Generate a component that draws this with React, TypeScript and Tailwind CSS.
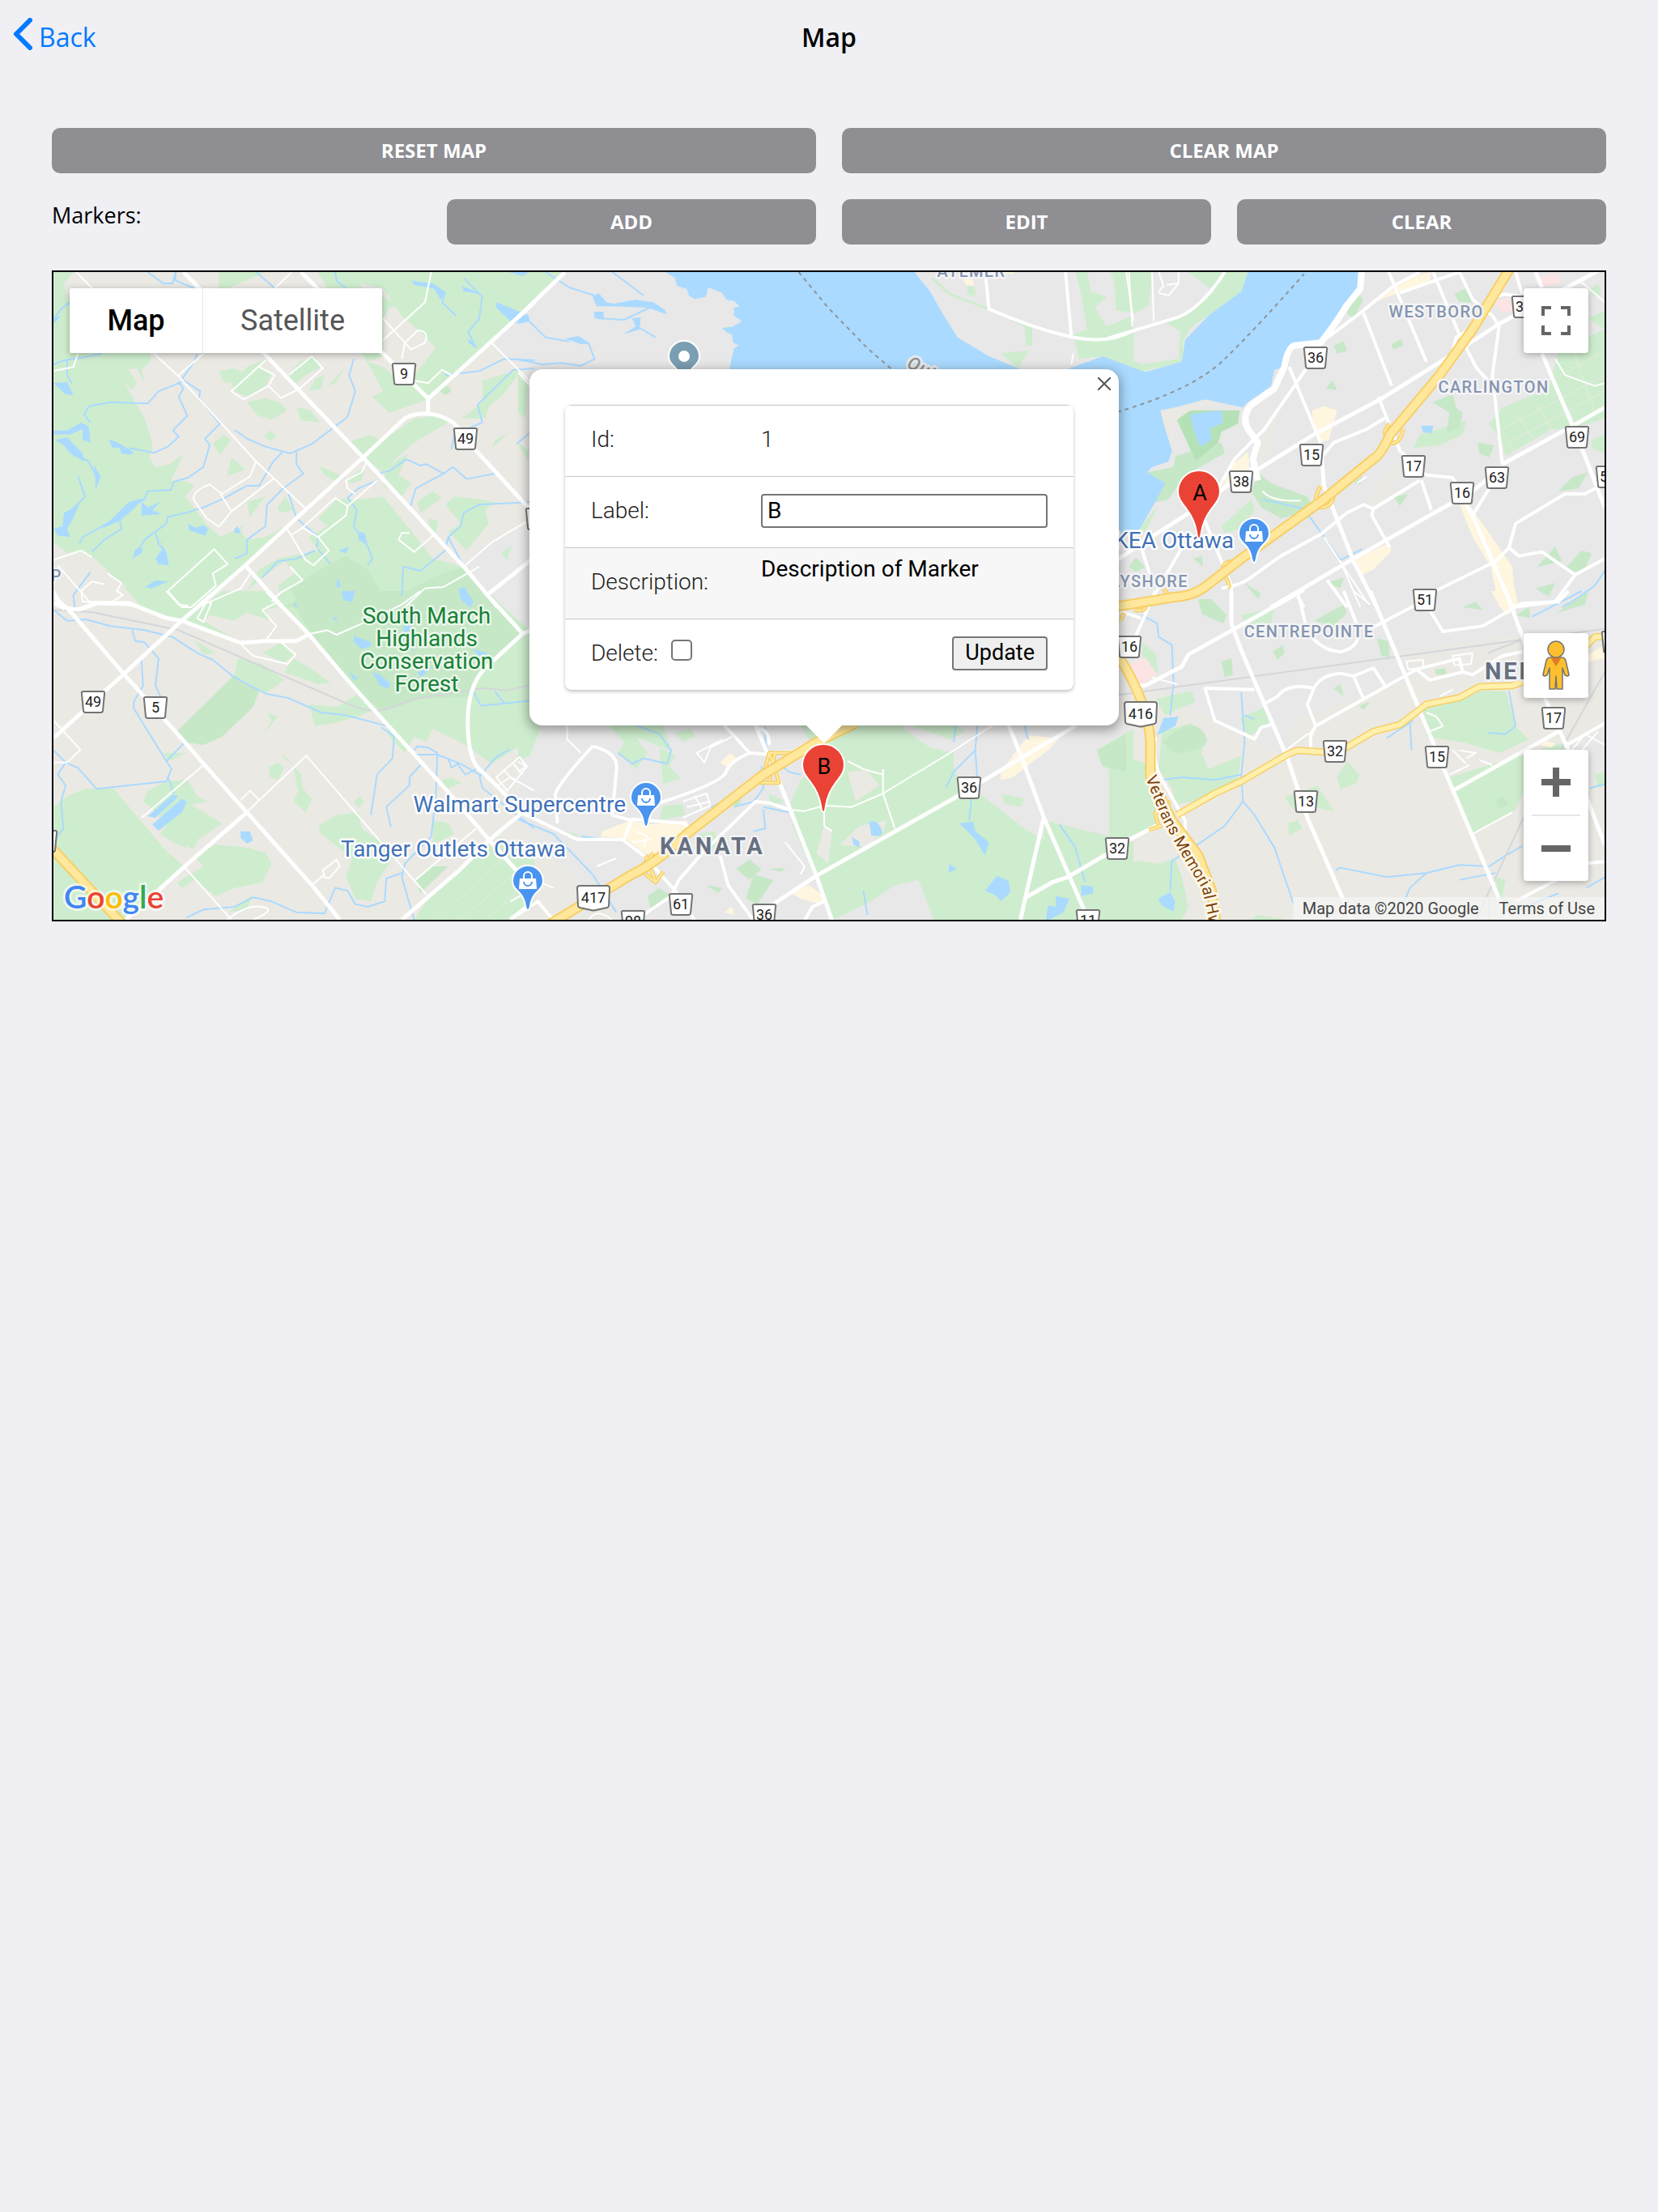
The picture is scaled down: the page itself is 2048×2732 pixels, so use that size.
import { useState } from "react";

type TileId = "nw" | "sw" | "nc" | "sc" | "ne" | "se";

type Layer = {
  fill?: string;
  stroke?: string;
  width?: number;
  dash?: string;
  shapes: Partial<Record<TileId, string>>;
};

type Label = {
  x: number;
  y: number;
  text: string;
  kind: "park" | "poi" | "area" | "city";
  anchor?: "start" | "middle" | "end";
};

// every tile is drawn on its own grid and placed on the canvas with a matrix
const TILES: Record<TileId, string> = {
  nw: "matrix(.3827 0 0 .3333 60 330)",
  sw: "matrix(.3827 0 0 .3333 60 730)",
  nc: "matrix(.4847 0 0 .3333 640 330)",
  sc: "matrix(.4847 0 0 .3333 640 880)",
  ne: "matrix(.4082 0 0 .3333 1370 330)",
  se: "matrix(.4082 0 0 .3333 1370 730)",
};

const RAMPS: Layer["shapes"] = {
  sc: "M640,150L665,260H620L640,150 700,150 M655,145L640,255 M345,520L310,580 350,630 370,590 M325,530L350,625",
  ne: "M850,580Q820,610 850,650 M890,600Q880,660 850,650 M640,810Q610,880 640,890 M680,830Q680,890 640,890 M380,1090Q330,1090 350,1140T360,1185 M165,1190L185,1225",
  se: "M185,780Q140,800 140,830L150,870 M35,110L45,80 M75,70Q120,80 110,40 M120,885L160,870",
};

const MOTORWAYS: Layer["shapes"] = {
  sw: "M0,940L240,1236",
  sc: "M80,785L290,600Q350,560 430,450L620,235 760,110 860,40",
  ne: "M1215,0L1100,230 1000,400 850,620Q820,700 800,710L650,860 400,1080 290,1185Q250,1220 200,1222L0,1262",
  se: "M30,245Q120,420 125,560V690L190,850 270,980 310,1110 325,1236",
};

const TRUNKS: Layer["shapes"] = {
  se: "M205,830L320,750 400,705 540,605 570,590 690,600 800,520 880,495 960,420 1060,395 1120,355 1220,350 1280,325 M1430,220L1470,170 1510,166",
};

const LAYERS: Layer[] = [
  {
    fill: "#e8e8e8",
    shapes: {
      nw: "M1568,130L1430,280 1568,430Z M1568,960L1440,1000 1340,1110 1430,1210 1450,1260H1568Z M90,1080L140,1070 190,1130 130,1160Z",
      sw: "M1410,0L1530,160 1568,150V0Z",
      nc: "M120,18H1568V390H0V190Z",
      sc: "M0,47H1568V770H260L100,550 0,400Z",
      ne: "M0,18H1568V1260H0Z",
      se: "M0,390L150,370 260,440 540,620 560,480 900,330 1130,190 1290,180 1568,150V0H0Z M1100,900L1260,760 1568,700V480L1040,740Z",
    },
  },
  {
    fill: "#ceedce",
    shapes: {
      nw: "M16,18H80L50,60 60,130 70,80H230L330,330 325,355 300,380 310,430 285,375 255,378 285,425 270,455 240,420 270,480 295,530 310,560 332,640 335,672 325,710 347,742 390,730 432,695 420,735 395,790 450,795 470,810 440,850 480,905 510,955 555,1000 625,960 650,930 640,870 700,850 660,910 620,975 640,1010 700,1000 780,950 640,1100 480,1260H300L240,1200 250,1180 190,1130 110,1050 60,1060 16,1020Z M550,18H700L580,78H550Z M870,18H1000L1010,78 1140,140 1100,150 1080,190V330L1030,350 1080,370 1110,400 1160,350 1225,490 1100,540 1045,480 1080,460ZM1000,18H1568V110L1430,280 1225,490 1180,400 1250,300 1200,240 1140,180 1080,78 1000,60Z M550,385L600,375 625,390 640,370 700,340 680,370 720,395 700,440 640,480 600,460 590,430 565,425Z M640,500L700,485 745,500 770,530 720,565 675,550Z M800,518L845,530 875,575 815,568Z M530,655L565,620 588,640 555,695Z M590,705L635,750 575,775Z M695,625L715,605 735,625 715,645Z M770,405L810,350 860,330 880,370 830,400 800,430Z M840,460L860,415 890,400 880,450Z M900,440L955,375 925,430Z M975,645L1040,620 1070,640 1120,610 1180,560 1260,550 1290,575 1180,650 1120,710 1080,760 1015,705Z M1335,560L1400,500 1400,420 1530,375 1470,470 1420,520 1410,560Z M1430,670L1490,610 1440,640Z M870,735L960,780 935,800 890,770Z M1090,740L1160,690 1130,770 1170,800 1140,850 1080,810Z M960,790L1020,740 1010,790 975,800Z M1190,870L1240,830 1270,855 1200,910Z M1280,880L1310,850 1390,860 1440,870 1410,900 1420,950 1350,1050 1290,980 1330,950Z M1225,930L1258,940 1250,985 1230,975Z M1010,860L1080,850 1130,920 1165,970 1240,1080 1340,1110 1450,1260H760L740,1180 800,1130 760,1090 690,1150 640,1200 680,1120 740,1080 870,1050 840,1000 900,960 870,930 930,860Z M740,890L765,850 790,900 745,910Z M1460,1060L1495,1030 1480,1085Z",
      sw: "M180,0H540L430,108 380,100 300,60Z M430,118L560,0H700L740,60 700,70 720,110 640,80 600,110 520,90 500,110 560,150 620,190Z M730,30L760,0H1410L1568,160V540L1430,640 1370,590 1330,560 1240,510 1220,560 1180,540 1150,600 1100,540 1090,500 970,350 840,160Z M470,180L540,230 500,235Z M610,250L690,270 760,330 700,380 600,310Z M690,230L750,190 790,240 760,265Z M760,300L790,250 850,290 910,340 870,345Z M840,420L930,430 1000,380 1050,440 1000,465 920,490 860,500Z M705,450L740,465 690,535 720,480Z M750,600L790,640 760,620Z M710,650L740,635 760,655 740,700 715,690Z M790,650L815,680 820,730 850,770 830,820 790,780 805,740Z M305,780L320,740 380,705 450,700 480,760 515,780 460,790 500,820 560,860 510,900 440,950 400,930 360,900 380,870 330,800Z M16,800L60,760 120,732H210L370,950 440,1025 400,1070 350,1110 250,1218H16Z M470,900L490,905 470,955 450,950Z M415,1080L500,1020 470,980 540,940 640,950 700,970 720,1010 690,1080 600,1100 540,1130 470,1070 430,1100Z M870,870L930,830 1000,820 1010,880 1090,940 1110,990 1060,1080 1040,1150 990,1140 960,1060 980,990 880,900Z M985,780L1005,760 1020,780 1000,805Z M1240,850L1290,860 1310,900 1240,940Z M1270,700L1300,690 1335,710 1280,735Z M1230,1130L1360,1000 1460,910 1568,1000V1170L1500,1218H1180Z M370,600L440,600 390,630Z M580,1190L660,1125 640,1180Z",
      nc: "M0,18H110L0,175Z M1150,50L1165,80V110L1143,100Z M1420,18H1450L1460,90 1500,110 1470,150 1500,220 1568,180V380L1490,330 1430,340 1415,250 1450,230 1435,100Z M1510,18H1550L1568,150 1545,165 1520,60Z M1230,318L1300,310 1275,375Z M1290,215L1310,220V290H1295Z M520,225L545,220 530,240Z M0,390L25,430 20,560 0,540Z M0,650L28,680V720L0,660Z",
      sc: "M0,47H60L30,160 0,180Z M230,47H370L390,140 350,120 300,90 330,150 300,210 255,150 270,110Z M360,130L400,160 385,200 415,245 370,265Z M400,75L440,60 450,90 420,110Z M720,47H980L1010,200 1040,190 1050,250 930,300 960,380 940,440 900,450 860,560 800,600 750,590 700,420 690,350 720,250 780,200Z M830,47H970L1050,130 1110,150 1110,200 1120,240 1300,440 1340,470 1340,400 1568,480V770H1060L1020,620 960,640 900,700 800,770 770,650 750,600 900,450 940,400 870,330 900,300 930,250 880,200 840,210Z M1475,140L1568,60V240L1490,200Z M1230,300L1290,320 1280,350 1240,340Z M1000,47L1100,100 1140,70 1120,47Z M370,345L420,340 425,380 360,400Z M460,450L500,440 520,520 480,530Z M640,300L680,330 640,350Z M120,440L160,455 120,460Z",
      ne: "M240,18H425L400,90 300,180 250,220 225,270 220,360 130,375 90,395 0,340V310L100,360 210,340 215,240 170,200 230,180 320,90Z M15,18H130L120,140 80,170 20,160Z M1360,310L1500,230V560L1400,600 1340,600 1200,700 1190,650 1150,580 1190,520 1330,450Z M920,670L940,620 1080,570 1070,620 1000,660Z M340,960L430,860 440,900 400,970 350,985Z M90,970L150,880 110,980Z M1455,80L1480,60 1490,100 1465,110Z M1450,190L1500,160V230Z M1460,640L1500,620V690L1460,670Z",
      se: "M0,590L110,640 140,720 150,870 0,950Z M160,520L250,490 290,560 280,600 300,660 400,610 390,700 250,780 200,790 190,730 150,660Z M140,400L250,370 260,410 170,460Z M100,190L140,230 150,310 100,240Z M395,470L470,430 490,490 420,540Z M950,440L1100,370 1200,370 1230,500 1270,550 1180,600 1070,560 960,540Z M690,690L720,630 757,680 750,710 700,735Z M530,765L630,720 680,815 610,800 560,810Z M540,860L570,850 585,880 545,905Z M1040,740L1030,690 1270,600 1380,560 1400,620 1250,750 1230,810 1100,900Z M0,1030L90,1000 150,1010 200,990 220,1060 240,1170 220,1218H0Z M1170,1060L1200,1070 1190,1130 1220,1180 1180,1160Z M450,1200L540,1218H430Z M1470,680L1500,670V720L1480,730Z M400,90L500,60 490,120 420,125Z",
    },
  },
  {
    fill: "#c6e8c7",
    shapes: {
      nw: "M800,1240L780,1180 960,1070 1030,1120 1070,1200 1040,1260H750Z M1340,1110L1450,1260H1060L1240,1150Z M1250,450L1290,440 1300,460 1280,475Z",
      sw: "M790,40L820,0H1420L1500,110 1530,160 1400,290 1360,390 1200,400 1080,445 1000,380 850,170Z M415,520L600,310 680,370 660,430 560,540 500,570 440,560Z M1185,1070L1230,1020 1290,1020 1200,1120Z",
      sc: "M555,580L590,545 620,580 590,620Z M600,600L650,620 610,710 580,690Z M330,680L360,650 390,680 340,740Z M480,640L520,650 510,670Z M1475,140L1550,80V220L1490,200Z M640,580L680,575 670,590Z M540,340L570,320 560,350Z",
      ne: "M115,760L195,740 200,700 340,650 350,690 230,770 180,860 140,870Z M450,760L490,800 600,850 620,900 520,930 460,890 430,830Z M60,1110L80,1075 110,1110 80,1130Z M720,170L750,95 770,120 740,190Z M680,290L710,275 720,310 690,320Z M855,285L885,265 890,290 860,305Z M655,450L675,420 690,455Z M1045,100L1085,75 1100,130 1060,130Z M980,500L1040,470 1050,520 1070,540 1060,600 1020,615 1030,540Z M1115,650L1165,660 1150,705 1120,690Z M860,850L905,840 880,885Z M1295,1110L1350,1035 1370,1090Z M1385,1110L1430,1050 1460,1060 1440,1120 1400,1130Z M1290,1190L1350,1170 1330,1220Z M1360,830L1400,780 1450,760 1420,820Z M410,1170L460,1210 450,1230Z M660,1170L710,1150 700,1190Z M740,800L765,775 760,805Z M255,1080L280,1070 285,1110Z",
      se: "M200,520Q260,470 290,530T200,600L160,560Z M270,30L310,30 355,90 345,120 280,85Z M340,260L370,250 375,310 350,320Z M495,225L525,200 530,230 510,255Z M680,360L700,345 710,390Z M755,425L790,410 770,440Z M620,110L710,50 720,80 680,130Z M810,175L845,185 850,245 825,240Z M980,265L1015,265 1020,310 990,310Z M1070,60L1110,40 1130,70Z M1230,90L1270,60 1275,100Z M1355,80L1450,0 1440,50Z M1170,780L1190,760 1210,790 1180,810Z",
    },
  },
  {
    fill: "#b5e1b6",
    shapes: { ne: "M205,565L245,530 395,530 390,580 340,610 330,650 262,718Z" },
  },
  {
    fill: "#ebe9e4",
    shapes: {
      nw: "M60,1060L16,1020V1260H300L240,1180 150,1080Z",
      sc: "M890,500L930,440 940,400 870,420 820,490Z M780,420L800,440 790,560 760,520Z M840,220L890,215 920,270 860,330Z",
      ne: "M155,520L290,485 330,500 240,535 200,570 190,680 160,580Z M480,560L510,520 490,700 450,740 460,640Z M780,900L830,760 880,720 850,860Z",
      se: "M850,200L900,220 1250,160V240L940,300Z",
    },
  },
  {
    fill: "#fff6df",
    shapes: {
      nc: "M1135,40L1160,45V70L1140,65Z M1230,18H1265V24H1230Z",
      sc: "M285,400L340,415 430,400 440,440 400,480 380,540 320,520 270,465 210,460 215,440Z M515,185L540,150 555,165 540,210Z M690,665L740,640 780,680 770,710 720,690Z M1300,85L1380,95 1350,140 1260,240 1230,250 1230,220Z M525,740L545,720 550,750Z",
      ne: "M615,530L650,515 690,530 665,640 635,650 615,580Z M375,730L420,685 425,740 340,820Z M745,1080L840,1025 855,1050 800,1120 765,1140Z M1060,880L1090,880 1220,1110 1225,1180 1240,1260H1180L1155,1110 1100,1000Z M930,30L975,18 970,55 800,130 860,80Z",
      se: "M1155,0H1200L1230,70 1200,90Z M1305,570L1320,555 1350,565 1340,580Z M1445,240L1500,200V250L1450,260Z",
    },
  },
  {
    fill: "#fce4e4",
    shapes: {
      ne: "M1165,130L1210,110 1225,160 1190,170Z M1290,40L1360,18 1365,60 1310,75Z",
      se: "M60,270L110,245 145,310 100,345 75,330Z",
    },
  },
  {
    fill: "#aadaff",
    shapes: {
      nw: "M16,605L60,605 105,575 130,590 135,650 110,640 110,600 70,620 16,620Z M20,640L60,630 110,690 115,720 70,690 50,660Z M195,640L215,645 275,685 265,695 235,690 230,670 205,668Z M16,430L60,425 80,475 55,470 30,445Z M150,770L145,730 168,775 152,825Z M16,970L45,960 50,910 100,880 75,940 60,970 70,1000 30,995Z M170,970L260,870 310,855 270,900 230,940Z M300,870L320,890 360,870 335,900 365,915 300,920Z M450,950L475,965 500,955 515,970 505,995 455,975Z M270,1080L280,1045 305,1040 300,1060Z M345,985L380,1055 388,1105 355,1100 345,1080 370,1040Z M312,1185L345,1160 388,1165 330,1190Z M600,970L610,960 620,985 600,985Z M935,1050L970,1035 960,1060Z M1000,980L1020,985 1030,1030 1000,1010Z M930,1150L945,1180 930,1190Z M950,1210L985,1210 980,1240 955,1235Z M1325,1190L1345,1185 1355,1230 1370,1240 1360,1260 1330,1230Z M1335,70L1400,100 1340,90Z M1170,50L1240,60 1285,95 1265,120 1245,80 1180,65Z M1445,130L1520,165 1550,190 1500,210 1445,150Z M1355,265L1375,285 1380,300 1355,280Z M1485,18H1550L1530,33Z M16,185L40,180 16,210Z",
      sw: "M320,835L400,755 420,760 345,840Z M335,865L430,770 447,780 430,820 355,888Z M620,890L650,890 660,925 640,935 620,915Z M985,165L1040,190 1040,205 1010,215 985,190Z M945,0H990L980,35 950,30Z M1325,0H1350L1372,40 1360,60 1330,30Z M1045,300L1070,310 1105,345 1095,362 1070,350Z M1145,130L1170,120 1160,200 1190,230 1150,200Z M1370,215L1420,230 1390,245Z M1190,300L1240,280 1200,320Z M970,300L1000,325 985,330Z M790,40L805,55 795,62Z M915,95L935,100 925,110Z",
      nc: "M375,18L400,40 405,70 430,80 435,105 450,118 478,110 485,75 520,95 530,120 550,125 565,145 550,150V180L570,200 545,222 520,225 530,240 545,250 548,280 563,290 550,300 535,400H1600V390L1490,330 1400,378H1280L1200,330 1120,260 1085,180 1050,90 1010,18Z M190,110L205,95 225,130 245,135 300,120 320,125 345,130 375,160 378,175 330,150 240,145 200,145Z M193,165H218V195L195,190Z M290,190L312,185 310,230 268,248 300,220Z M120,265L155,255 185,285 160,285Z M0,180L25,175 30,200 0,210Z",
      sc: "M895,405Q915,395 925,430T900,455Z M850,460L870,480V500L855,490Z M1125,410L1160,405 1165,440 1200,480 1190,530 1165,470Z M1190,660L1220,605 1250,625 1255,665 1230,700 1220,680Z M1435,640L1465,645V670L1435,680Z M1370,680L1405,690 1390,740 1350,770H1345L1350,715 1370,720Z M1098,560L1118,580 1098,595Z M160,455L210,465 165,465Z M490,350L510,335 500,360Z",
      ne: "M420,18H755L760,80 700,160 640,270 560,290 530,370 500,380 490,440 420,500 405,520 330,500 290,490 200,520 155,530 165,580 190,680 180,720 130,740 115,760 170,800 140,870 90,975 0,1000V360L90,395 220,350 230,270 300,180 400,90Z M245,545L340,530 345,575 305,600 310,640 275,665 255,600Z M945,587H982L975,615 950,612Z",
      se: "M145,535L165,470 210,465 200,500Z M148,1140L185,1115 200,1150 195,1188 160,1165Z",
    },
  },
  {
    stroke: "#aadaff",
    width: 2,
    shapes: {
      nw: "M16,360L50,345 110,335 170,320 M430,425L355,460 320,505 200,500 130,515 115,545 135,575 M420,425L435,450 420,480 448,550 402,605 420,628 385,665 340,688 260,670 M430,415L490,460 485,485 553,580 505,635 520,660 500,740 450,780 405,795 395,825 320,830 310,860 250,900 220,930 110,1000 100,1025 M480,320L470,350 430,415 M600,603L640,635 700,665 780,690 850,655 925,590 965,555 990,460 970,400 985,340 M800,685L800,730 822,765 755,822 705,880 700,960 640,1010 640,1060 600,1080 M755,685L725,720 680,810 640,810 560,860 500,890 445,910 385,925 380,950 310,1010 275,1075 M345,985L355,1025 380,1060 M775,840L800,930 870,1000 865,1040 M870,1045L910,1100 M860,1050L800,1080 740,1090 690,1150 M1060,765L1100,755 1155,712 1200,735 1220,730 1275,765 1305,740 1350,785 1440,765 M1275,765L1185,820 1168,885 M1060,790L1000,820 965,855 995,900 985,960 1030,1035 1045,1080 1030,1105 M1340,1110L1290,1000 1330,960 1340,910 1390,880 1560,870 M1290,1000L1280,1050 1200,1125 1145,1110 1140,1220 M1280,400L1390,385 1470,340 1568,345 M1568,375L1500,380 1385,510 1400,575 1310,620 1300,675 M1568,600L1510,655 M1240,70L1280,95 1270,130 1315,180 M1340,40L1400,110 1390,190 1355,240 1380,300 M85,1270L80,1215 135,1130 M16,190L45,150 70,130 M60,345L60,400 75,430 M320,18L370,60 400,60 410,18 410,50 470,78 M670,18L730,78 M925,18L930,50 960,78 M95,775L118,850 75,900 M45,650L75,690 130,720 155,780 M230,940L235,970 180,1010 140,1055",
      sw: "M16,70L60,110 120,105 200,130 310,145 400,170 480,230 530,255 600,320 700,380 770,395 880,450 960,460 1090,500 M270,145L280,185 310,190 355,250 345,350 365,400 M300,255L305,350 275,410 275,435 380,630 397,660 380,705 155,733 95,655 55,635 16,590 M380,630L440,560 M385,690L405,750 M55,635L30,680 55,720 40,780 48,880 25,915 M1075,505L1115,540 1110,620 1060,680 1055,720 1040,830 M1200,645L1165,690 1165,720 1090,800 1105,875 M1180,590L1190,575 1225,580 1255,600 1250,760 1235,910 1150,1010 1140,1060 1180,1218 M1180,606H1255L1330,640 1390,680 1400,730 1568,880 M1290,620L1300,655 1320,640 1345,680 1380,660 M1390,690L1440,620 1490,585 M445,1210L500,1180 600,1170 660,1135 720,1150 800,1190 890,1195 925,1100 965,1110 990,1160 1030,1170 1085,1150 1090,1065 1140,1045 M1370,370L1395,425 1568,405 M1440,370L1470,415",
      nc: "M70,18L130,75 195,105 M240,18L320,105 M215,190L270,195 335,150 M25,195L70,260 130,275 M180,285L195,340 160,365 110,355 60,360 30,350 0,343 M310,225L350,260",
      sc: "M300,47L360,80 390,140 380,190 320,170 290,190 255,150 M630,50V110L640,160 690,220 720,230 M550,350L600,330 625,280 620,200 M625,350L690,370 M625,360L630,430 600,440 M1170,50L1165,140 1110,220 1090,280 M1165,140L1170,240 M1155,320L1150,400 M1380,415L1420,500 1445,630 M0,395L90,450 190,600 250,740 M880,660L890,750 M1290,47L1300,100 M1115,47L1110,110",
      ne: "M460,860L500,870 590,895 650,1000 700,1085 765,1045 M1500,1125L1470,1180 1400,1240 1370,1260",
      se: "M100,90L145,120 150,170 190,200 195,340 185,460 M400,375L410,560 400,680 405,780 350,870 255,950 190,1000 185,1110 M410,460L440,475 M160,700L220,690 320,700 400,680 M405,780L440,830 500,950 560,1165 M685,1035L700,1025 840,1060 960,1045 1060,1015 1150,1020 1200,980 1250,945 M960,1045L910,1100 890,1160 M910,480L915,590 M920,480L840,545 M1060,1070L1170,1045 M1280,95L1430,0 M1210,370L1230,500 1200,530 1145,525 M1240,1180L1360,1120 M1445,1100L1500,1060 M1455,730L1500,715",
    },
  },
  {
    stroke: "#ceedce",
    width: 3,
    shapes: { nc: "M1055,40L1100,100 1200,155 1290,215" },
  },
  {
    stroke: "#e8e8e8",
    width: 1,
    shapes: {
      ne: "M1190,600L1500,400 M1170,560L1230,700 M1230,540L1290,650 M1290,500L1340,600 M1350,430L1410,580 M1400,290L1470,540 M1340,420L1500,310 M1210,650L1500,460",
      sw: "M1250,1218L1480,980 M1330,1218L1540,1010 M1410,1218L1568,1060",
    },
  },
  {
    stroke: "#d4d6da",
    width: 2,
    shapes: {
      sw: "M16,70L140,78 420,145 950,410Q1040,460 1100,435L1180,400 1400,360 1480,368 1568,345",
      se: "M0,390L1250,180 1500,140 M1110,1218L1250,850 1385,550 1500,300 M1145,230L1250,180",
    },
  },
  {
    stroke: "#8f9499",
    width: 2,
    dash: "5 5",
    shapes: {
      nc: "M715,18L790,150 890,300 952,378",
      ne: "M0,545Q250,460 350,340T590,25",
    },
  },
  {
    stroke: "#ffffff",
    width: 2,
    shapes: {
      nw: "M90,18L140,78 M340,320L420,405 670,720 830,895 M500,320L415,405 M16,385L80,370 95,320 M1235,18L1215,130 1080,270 M1080,190L1170,305 1215,280Q1230,235 1190,235L1150,280 1140,340 M1430,280L1568,440 M1300,400L1270,380 1225,430 1180,420 M700,345L590,460 630,490 710,440 750,485 810,450 885,375 850,330 775,400 M710,440L730,400 680,370 M670,720L650,775 560,840 520,805Q460,830 470,865L510,930 550,962 590,905 555,840 M590,905L725,785 M770,970L830,1085 855,1105 905,1050 870,1000 820,965 780,995 M820,965L925,855 965,885 960,920 870,1000 M965,885L1060,790 M1025,725L1010,760 960,790 965,820 990,840 M535,1045L578,1100 530,1135 540,1180 460,1260H430L385,1200Z M1245,990L1180,1055 1130,1010 1140,985 1165,985 M1390,1110L1275,1185 1215,1190 1150,1260 M1340,1110L1430,1020 1540,945 M780,1110L820,1160 750,1205 720,1240 M655,1130L620,1190 480,1260 M16,1085L105,1050 140,1075 M30,1105L140,1250 M190,1135L235,1170 220,1200 240,1215 205,1240 110,1240 105,1200 140,1165 180,1175 M785,18L730,78",
      sw: "M300,840L500,645 M680,775L832,610 1140,1020 1220,1125 M620,775L650,740 680,775 M640,820L680,775 M440,1025L590,1218 M620,195L660,240 770,270 798,235 750,190 M700,185L735,130 690,70 740,40 M840,160L900,145 930,162 1060,95 1140,50 1200,0 M16,480L103,588 60,635 16,635 M1185,1070L1380,880 M850,1090L890,1050 885,1035 930,995 940,1020 905,1065 885,1058 M575,1218Q640,1160 690,1170T660,1218 M380,0L420,50 450,55 M480,100L510,40 525,45 500,115Z M1445,690L1520,615 1545,650 1480,740Z M1470,665L1500,700 M1500,640L1530,680 M1450,720L1490,690 1568,740 M1490,1150L1568,1100",
      nc: "M0,390L28,435 M1550,18L1568,200 M1415,320L1410,360",
      sc: "M690,360L730,365 780,345 850,350 930,300 1100,150 1210,47 M780,365V420L800,440 M930,210V300L960,430 M545,90L490,130 475,185 455,150 520,100 M420,330L480,300 490,345 420,390 M450,310L470,360 M430,350L490,330 M300,440L330,460 320,500 M290,480L340,470 M125,47V100L160,150 M840,180L880,210 930,230 M680,480L730,570 720,600 M200,570L250,540 M0,180L20,200 0,220 M180,770Q200,720 240,770 M40,620L90,650",
      ne: "M130,18L135,200 M60,18L70,220 M150,90L165,70 150,18 M210,18V60L180,105 150,95 M175,65L210,60 M465,830Q490,870 580,865 M1350,340L1380,400 1470,440 1500,430 M1425,50L1500,130 M650,1000L720,1130 780,1240 M750,800L780,775 M700,1090L760,1260",
      se: "M1100,900L1220,820 M535,590L600,530 620,530 M1030,680L1090,645 M1120,625L1160,645 M1040,590L1080,640 M1060,590L1110,600 1080,620 M900,260L950,255V285L905,290Z M1040,240L1100,230 1095,270 1045,275Z M960,450L990,465 1010,500 970,520 M1400,590L1440,530 1500,570 M1430,590L1480,520 M1000,390L1040,365 M740,0L790,50 M130,320L205,345",
    },
  },
  {
    stroke: "#ffffff",
    width: 4,
    shapes: {
      nw: "M16,1200L50,1270 M90,1270L150,1245 260,1250 300,1262",
      nc: "M1190,18L1200,155Q1300,220 1400,255T1568,235 M1395,18L1410,260",
      sc: "M0,365L150,470 265,470 320,530 400,660 450,770 M190,125Q110,250 95,300L100,410 M190,125Q260,150 250,220L240,380 290,400 M270,470L290,395 420,410 440,430 M525,47L590,150 640,155 M590,150Q540,180 530,220T360,335 M410,620L470,520 605,330 640,335 690,360 M515,530L535,640 600,770 M410,620L390,680 320,750 M0,750L50,700 90,770 M730,770L750,720 780,700 M640,150L700,145 760,95 M610,60Q640,60 640,120",
      ne: "M0,262L210,185Q280,150 350,18 M640,280L760,170 860,70 940,18 M770,170L855,440 M840,0L960,350 M980,18L1060,250 1110,370 1160,440 M1060,18L1100,120 1160,180 1180,220 1160,400 1190,730 M880,95L1060,18 M1230,18L1250,100 M815,480L860,620 880,680 960,770 1040,780 1070,860 M545,370L640,650 M600,370L470,600 380,710 330,820 M290,940L370,1180V1260 M340,1190Q400,1180 440,1140L520,1070 640,990 720,910 770,880 800,895 940,790 M800,895L795,920 850,1040 M945,790L975,900 M1500,800L1440,840 1380,840 1230,950 1210,1040 1170,1090 970,1210 M1210,1040L1240,1070 1310,1055 1410,1140 1500,1080 M1410,1140L1350,1240 1220,1260 M1150,820L1100,920 M645,700L680,650 780,600 840,555 M220,1040L130,1230 110,1260 M100,1050L135,1180 M1160,110L1200,100 1250,110 M660,1160L720,1260 M570,1220L590,1260 M1040,310L1050,260 1120,210",
      se: "M570,0L600,150Q640,220 700,225Q760,210 755,140L710,0 M440,365L290,360 320,480 440,548 460,505 490,495 M475,415L510,390Q540,340 620,360Q640,310 700,305L740,315 800,285 840,360 M620,360L600,420 625,500 610,530V590 M740,315L770,400 M625,500L930,290 1060,250 1070,300 970,330 930,290 M1070,300L1100,310 1190,240 1250,225 M790,140L930,50 M970,70L1010,150 1130,130 1250,45 1360,40 1390,0 M80,170L140,0 M140,540Q130,640 160,700L230,850V900 M1230,1150L1400,1040 M1430,1010L1500,1003 M35,75L95,100 M1385,570L1500,490",
    },
  },
  {
    stroke: "#ffffff",
    width: 5,
    shapes: {
      nw: "M435,18L700,325 1015,705 1340,1110 1450,1260 M815,18L1080,320 1225,487V540 M480,1260L640,1100 800,930 1015,705 1150,560Q1180,540 1225,543T1310,580L1380,680 1568,915 M1225,487L1310,400 1568,130 M635,1105L755,1260 M1415,1215L1568,1075",
      sw: "M16,20L70,75 245,310 440,560 500,640 640,820 850,1090 940,1218 M16,545L245,305 430,110 540,0 M16,45Q60,70 100,68L160,45H260L380,100 430,110 620,192 700,185H800L840,160 M705,0L840,160 980,350 1050,440 1180,605 1290,745 1420,920 1510,1035 M250,1218L440,1020 640,820 M1140,1218L1330,1030 1420,925 1530,820 M1405,0L1530,158 1405,290Q1350,360 1353,500T1400,670L1480,760 M1530,158L1568,140 M1490,1218L1550,1165",
      nc: "M0,185L120,18",
      sc: "M605,47L650,200 760,605 800,770 M640,720L760,605 1120,310 1280,170 1420,50 M1250,47L1285,175 1340,390 1445,740 M1280,770L1300,640 1340,385 M1295,685L1360,630 1400,610 1500,525",
      ne: "M450,750L620,620 820,490 1030,330 1180,210 1500,0 M1310,320L1400,580 1440,700 1500,890 M1290,18L1310,75 M1190,730L1400,590 1500,520 M1070,860L1100,920 1220,1260 M640,650L650,810 740,1090 810,1260 M0,1105L140,990 230,920 440,740 M490,1260L740,1080 840,1010 1100,830 1190,740",
      se: "M370,0V120L400,220 540,620 600,840 735,1218 M790,0L1010,650 1180,1140 1210,1218 M1200,0L1320,400 1390,590 1500,940 M70,350L110,350 220,280 240,235 380,140 590,-5 M0,960L150,865 M1040,740L1360,520",
    },
  },
  {
    stroke: "#ffffff",
    width: 8,
    shapes: {
      ne: "M765,0L760,80 720,140Q680,220 640,280L560,290Q540,300 530,370L500,450 430,510Q400,550 420,600L450,650 435,710 450,790",
    },
  },
  { stroke: "#f7cf66", width: 5, shapes: RAMPS },
  { stroke: "#ffeba1", width: 2, shapes: RAMPS },
  { stroke: "#f7cf66", width: 13, shapes: MOTORWAYS },
  { stroke: "#f7cf66", width: 9, shapes: TRUNKS },
  { stroke: "#fff0ac", width: 6, shapes: TRUNKS },
  { stroke: "#ffe89c", width: 9, shapes: MOTORWAYS },
];

const SHIELDS: [number, number, string][] = [
  [499, 462, "9"],
  [575, 542, "49"],
  [664, 641, "49"],
  [115, 867, "49"],
  [192, 874, "5"],
  [56, 1039, "7"],
  [841, 1117, "61"],
  [944, 1130, "36"],
  [782, 1138, "98"],
  [1197, 973, "36"],
  [1380, 1048, "32"],
  [1344, 1137, "11"],
  [1625, 442, "36"],
  [1620, 562, "15"],
  [1746, 576, "17"],
  [1806, 609, "16"],
  [1849, 590, "63"],
  [1948, 540, "69"],
  [1533, 595, "38"],
  [1882, 379, "34"],
  [1986, 589, "59"],
  [1760, 741, "51"],
  [1395, 799, "16"],
  [1649, 928, "32"],
  [1775, 935, "15"],
  [1919, 887, "17"],
  [1613, 990, "13"],
  [1993, 793, "8"],
];

const HIGHWAY_SHIELDS: [number, number, string][] = [
  [733, 1109, "417"],
  [1409, 882, "416"],
];

const LABELS: Label[] = [
  { x: 527, y: 770, text: "South March", kind: "park", anchor: "middle" },
  { x: 527, y: 798, text: "Highlands", kind: "park", anchor: "middle" },
  { x: 527, y: 826, text: "Conservation", kind: "park", anchor: "middle" },
  { x: 527, y: 854, text: "Forest", kind: "park", anchor: "middle" },
  { x: 773, y: 1003, text: "Walmart Supercentre", kind: "poi", anchor: "end" },
  { x: 699, y: 1058, text: "Tanger Outlets Ottawa", kind: "poi", anchor: "end" },
  { x: 1524, y: 677, text: "IKEA Ottawa", kind: "poi", anchor: "end" },
  { x: 1200, y: 342, text: "AYLMER", kind: "area", anchor: "middle" },
  { x: 77, y: 718, text: "CARP", kind: "area", anchor: "end" },
  { x: 1468, y: 725, text: "BAYSHORE", kind: "area", anchor: "end" },
  { x: 1774, y: 392, text: "WESTBORO", kind: "area", anchor: "middle" },
  { x: 1845, y: 485, text: "CARLINGTON", kind: "area", anchor: "middle" },
  { x: 1617, y: 787, text: "CENTREPOINTE", kind: "area", anchor: "middle" },
  { x: 815, y: 1055, text: "KANATA", kind: "city" },
  { x: 1834, y: 839, text: "NEPEAN", kind: "city" },
];

const LABEL_STYLES: Record<Label["kind"], string> = {
  park: "fill-[#188038] stroke-[#eaf7ea] text-[28px]",
  poi: "fill-[#4272b8] stroke-white text-[28px]",
  area: "fill-[#8595b0] stroke-[#f4f4f6] text-xl font-medium tracking-[0.07em]",
  city: "fill-[#66707f] stroke-[#f4f4f6] text-[29px] font-bold tracking-widest",
};

const RoadShield = ({ x, y, text }: { x: number; y: number; text: string }) => (
  <g transform={`translate(${x} ${y})`}>
    <path
      d="M-12 -13H12Q15 -13 14 -10L12 11Q12 13 9 13H-9Q-12 13 -12 11L-14 -10Q-15 -13 -12 -13Z"
      fill="#fff"
      stroke="#737373"
      strokeWidth="2"
    />
    <text textAnchor="middle" y="6" className="fill-[#222] text-lg">
      {text}
    </text>
  </g>
);

const HighwayShield = ({ x, y, text }: { x: number; y: number; text: string }) => (
  <g transform={`translate(${x} ${y})`}>
    <path
      d="M-17 -15H17Q20 -15 20 -12L19 10Q19 11 17 12L3 15Q0 16 -3 15L-17 12Q-19 11 -19 10L-20 -12Q-20 -15 -17 -15Z"
      fill="#fff"
      stroke="#737373"
      strokeWidth="2"
    />
    <text textAnchor="middle" y="6" className="fill-[#222] text-lg">
      {text}
    </text>
  </g>
);

const ShopPin = ({ x, y }: { x: number; y: number }) => (
  <g transform={`translate(${x} ${y})`}>
    <path
      d="M0 36Q-2 36 -3 31C-4 23 -7 18 -11 14C-16 9 -19 6 -19 0A19 19 0 0 1 19 0C19 6 16 9 11 14C7 18 4 23 3 31Q2 36 0 36Z"
      fill="#4a94f0"
      stroke="#fff"
      strokeWidth="2"
    />
    <path d="M-10 -3H10L11 10H-11Z" fill="#fff" />
    <path d="M-5 -3V-6A5 5 0 0 1 5 -6V-3" fill="none" stroke="#fff" strokeWidth="2" />
    <path d="M-5 1A5 5 0 0 0 5 1" fill="none" stroke="#4a94f0" strokeWidth="2" />
  </g>
);

const MarkerPin = ({ x, y, label }: { x: number; y: number; label: string }) => (
  <g transform={`translate(${x} ${y})`}>
    <path
      d="M0 58Q-2 58 -3 50C-5 37 -9 30 -15 22C-21 14 -26 9 -26 0A26 26 0 0 1 26 0C26 9 21 14 15 22C9 30 5 37 3 50Q2 58 0 58Z"
      fill="#ea4335"
      stroke="#fff"
      strokeWidth="2"
    />
    <text textAnchor="middle" x="1" y="11" className="fill-black text-[27px]">
      {label}
    </text>
  </g>
);

const MapCanvas = () => (
  <svg
    viewBox="66 336 1916 800"
    preserveAspectRatio="xMidYMid slice"
    className="block h-full w-full bg-[#ebe9e4] font-['Roboto',sans-serif]"
    role="img"
    aria-label="Map"
  >
    {LAYERS.map((layer, index) => (
      <g
        key={index}
        fill={layer.fill ?? "none"}
        stroke={layer.stroke ?? "none"}
        strokeWidth={layer.width}
        strokeDasharray={layer.dash}
        strokeLinejoin="round"
      >
        {(Object.keys(layer.shapes) as TileId[]).map((tile) => (
          <path
            key={tile}
            d={layer.shapes[tile]}
            transform={TILES[tile]}
            vectorEffect="non-scaling-stroke"
          />
        ))}
      </g>
    ))}

    {LABELS.map((label) => (
      <text
        key={label.text}
        x={label.x}
        y={label.y}
        textAnchor={label.anchor}
        strokeWidth="5"
        strokeLinejoin="round"
        paintOrder="stroke"
        className={LABEL_STYLES[label.kind]}
      >
        {label.text}
      </text>
    ))}

    <text
      transform="translate(1119 453) rotate(26)"
      strokeWidth="6"
      strokeLinejoin="round"
      paintOrder="stroke"
      className="fill-[#8f8f8f] stroke-[#e6e9ec] text-[22px] font-medium italic tracking-wider"
    >
      Outaouais
    </text>

    <path id="veterans" d="M1415 961L1437 1015L1462 1060L1485 1098L1492 1130L1498 1200" fill="none" />
    <text
      strokeWidth="6"
      strokeLinejoin="round"
      paintOrder="stroke"
      className="fill-[#7a400c] stroke-[#fff7e6] text-xl"
    >
      <textPath href="#veterans">Veterans Memorial Hwy</textPath>
    </text>

    {SHIELDS.map(([x, y, text]) => (
      <RoadShield key={`${x}-${y}`} x={x} y={y} text={text} />
    ))}
    {HIGHWAY_SHIELDS.map(([x, y, text]) => (
      <HighwayShield key={text} x={x} y={y} text={text} />
    ))}

    <ShopPin x={798} y={985} />
    <ShopPin x={652} y={1088} />
    <ShopPin x={1549} y={659} />
    <g transform="translate(845 440)">
      <path
        d="M0 36Q-2 36 -3 31C-4 23 -7 18 -11 14C-16 9 -19 6 -19 0A19 19 0 0 1 19 0C19 6 16 9 11 14C7 18 4 23 3 31Q2 36 0 36Z"
        fill="#7b9fb2"
        stroke="#fff"
        strokeWidth="2"
      />
      <circle r="7" fill="#fff" />
    </g>
    <MarkerPin x={1481} y={607} label="A" />
    <MarkerPin x={1017} y={945} label="B" />
  </svg>
);

const MapTypeControl = () => (
  <div className="absolute left-5 top-5 flex h-20 text-4xl shadow-[0_2px_8px_rgba(0,0,0,0.3)]">
    <button type="button" className="w-[164px] rounded-l bg-white font-medium text-black">
      Map
    </button>
    <button
      type="button"
      className="w-[222px] rounded-r border-l border-[#e6e6e6] bg-white text-[#565656]"
    >
      Satellite
    </button>
  </div>
);

const Pegman = () => (
  <svg viewBox="0 0 36 62" className="h-[62px] w-9">
    <path
      d="M11 21H25Q29 21 30 25L34 42Q34 44 32 44L29 43 26 34V60H19L18 44 17 60H10V34L7 43 4 44Q2 44 2 42L6 25Q7 21 11 21Z"
      fill="#fdbf2d"
      stroke="#737373"
      strokeWidth="1.5"
      strokeLinejoin="round"
    />
    <path d="M11 21H25L18 32Z" fill="#e07d29" />
    <circle cx="18" cy="11" r="10" fill="#fdbf2d" stroke="#737373" strokeWidth="1.5" />
  </svg>
);

const MapControls = () => (
  <>
    <button
      type="button"
      aria-label="Toggle fullscreen view"
      className="absolute right-5 top-5 flex size-20 items-center justify-center rounded bg-white shadow-[0_2px_8px_rgba(0,0,0,0.3)]"
    >
      <svg viewBox="0 0 36 36" className="size-9" fill="#666">
        <path d="M0 0H12V4H4V12H0ZM24 0H36V12H32V4H24ZM0 24H4V32H12V36H0ZM32 24H36V36H24V32H32Z" />
      </svg>
    </button>
    <div className="absolute bottom-12 right-5 flex flex-col gap-16">
      <button
        type="button"
        aria-label="Drag Pegman onto the map to open Street View"
        className="flex size-20 items-center justify-center rounded bg-white shadow-[0_2px_8px_rgba(0,0,0,0.3)]"
      >
        <Pegman />
      </button>
      <div className="flex flex-col items-center rounded bg-white shadow-[0_2px_8px_rgba(0,0,0,0.3)]">
        <button
          type="button"
          aria-label="Zoom in"
          className="flex size-20 items-center justify-center"
        >
          <svg viewBox="0 0 36 36" className="size-9" fill="#666">
            <path d="M14 0H22V14H36V22H22V36H14V22H0V14H14Z" />
          </svg>
        </button>
        <div className="h-[2px] w-[60px] bg-[#e6e6e6]" />
        <button
          type="button"
          aria-label="Zoom out"
          className="flex size-20 items-center justify-center"
        >
          <svg viewBox="0 0 36 36" className="size-9" fill="#666">
            <path d="M0 14H36V22H0Z" />
          </svg>
        </button>
      </div>
    </div>
  </>
);

const GoogleLogo = () => (
  <svg viewBox="0 0 140 52" className="absolute bottom-0 left-2 h-[52px] w-[140px]">
    <text
      x="5"
      y="38"
      strokeWidth="6"
      strokeLinejoin="round"
      paintOrder="stroke"
      className="stroke-white/60 font-['Lato',sans-serif] text-[39px] font-semibold"
    >
      <tspan fill="#4285f4">G</tspan>
      <tspan fill="#ea4335">o</tspan>
      <tspan fill="#fbbc04">o</tspan>
      <tspan fill="#4285f4">g</tspan>
      <tspan fill="#34a853">l</tspan>
      <tspan fill="#ea4335">e</tspan>
    </text>
  </svg>
);

const MapFooter = () => (
  <div className="absolute bottom-0 right-0 flex h-7 gap-px text-xl leading-7 text-[#444]">
    <span className="bg-[#f5f5f5]/70 px-3">Map data ©2020 Google</span>
    <a href="#terms" className="bg-[#f5f5f5]/70 px-3">
      Terms of Use
    </a>
  </div>
);

const InfoWindow = () => {
  const [label, setLabel] = useState("B");
  const [description, setDescription] = useState("Description of Marker");

  return (
    <div className="absolute left-[588px] top-[120px] w-[728px] rounded-2xl bg-white px-11 py-11 text-[28px] font-light text-[#222] shadow-[0_4px_14px_2px_rgba(0,0,0,0.35)]">
      <button type="button" aria-label="Close" className="absolute right-[10px] top-[10px] p-0">
        <svg viewBox="0 0 16 16" className="size-4" stroke="#555" strokeWidth="2">
          <path d="M0 0L16 16M16 0L0 16" />
        </svg>
      </button>

      <form className="mr-3 overflow-hidden rounded-lg shadow-[0_2px_4px_rgba(0,0,0,0.25)]">
        <div className="flex h-[88px] items-center border-t border-[#c8c7cc] px-8 pb-1">
          <span className="w-[210px]">Id:</span>
          <span>1</span>
        </div>
        <div className="flex h-[88px] items-center border-t border-[#c8c7cc] px-8 pb-1">
          <label htmlFor="marker-label" className="w-[210px]">
            Label:
          </label>
          <input
            id="marker-label"
            value={label}
            onChange={(e) => setLabel(e.target.value)}
            className="h-[42px] min-w-0 flex-1 rounded border-2 border-[#767676] px-[6px] font-normal text-black"
          />
        </div>
        <div className="flex h-[88px] items-center border-t border-[#c8c7cc] bg-[#f7f7f7] px-8 pb-1">
          <label htmlFor="marker-description" className="w-[210px]">
            Description:
          </label>
          <textarea
            id="marker-description"
            value={description}
            onChange={(e) => setDescription(e.target.value)}
            className="h-16 min-w-0 flex-1 resize-none overflow-hidden font-normal leading-8 text-black"
          />
        </div>
        <div className="flex h-[88px] items-center justify-between border-t border-[#c8c7cc] px-8 pb-1">
          <div className="flex items-baseline gap-4">
            <label htmlFor="marker-delete">Delete:</label>
            <input
              id="marker-delete"
              type="checkbox"
              className="size-[26px] appearance-none rounded-[5px] border-2 border-[#767676] bg-white"
            />
          </div>
          <button
            type="button"
            className="h-[42px] rounded border-2 border-[#767676] bg-[#efefef] px-[14px] text-[27px] font-normal leading-none text-black"
          >
            Update
          </button>
        </div>
      </form>

      <svg viewBox="0 0 44 22" className="absolute left-[342px] top-full h-[22px] w-11">
        <path d="M0 0H44L22 22Z" fill="#fff" />
      </svg>
    </div>
  );
};

const ActionButton = ({ children }: { children: string }) => (
  <button
    type="button"
    className="h-14 rounded-[10px] bg-[#8e8e93] text-2xl font-bold uppercase text-white"
  >
    {children}
  </button>
);

export default function App() {
  return (
    <div className="min-h-screen bg-[#efeff4] font-['Open_Sans',sans-serif] text-black">
      <header className="grid h-[92px] grid-cols-3 items-center px-4">
        <a href="#back" className="flex items-center gap-2 text-[32px] text-[#007aff]">
          <svg viewBox="0 0 24 40" className="mb-2 h-10 w-6">
            <path
              d="M21 3L4 20L21 37"
              fill="none"
              stroke="currentColor"
              strokeWidth="6"
              strokeLinecap="round"
              strokeLinejoin="round"
            />
          </svg>
          Back
        </a>
        <h1 className="text-center text-[32px] font-semibold">Map</h1>
      </header>

      <main className="flex flex-col gap-8 px-16 pt-[66px]">
        <div className="grid grid-cols-2 gap-8">
          <ActionButton>Reset Map</ActionButton>
          <ActionButton>Clear Map</ActionButton>
        </div>
        <div className="grid grid-cols-4 gap-8">
          <p className="text-[27px] leading-10">Markers:</p>
          <ActionButton>Add</ActionButton>
          <ActionButton>Edit</ActionButton>
          <ActionButton>Clear</ActionButton>
        </div>
        <section className="relative h-[804px] overflow-hidden border-2 border-black font-['Roboto',sans-serif]">
          <MapCanvas />
          <MapTypeControl />
          <MapControls />
          <InfoWindow />
          <GoogleLogo />
          <MapFooter />
        </section>
      </main>
    </div>
  );
}
